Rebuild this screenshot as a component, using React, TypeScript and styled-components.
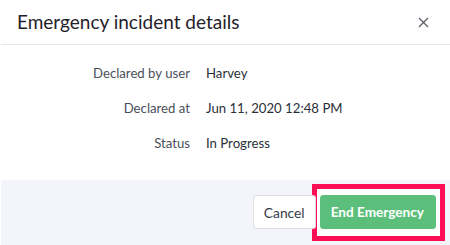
import React from "react";
import styled, { createGlobalStyle } from "styled-components";

const Global = createGlobalStyle`
  html, body { margin: 0; padding: 0; background: #ffffff; }
  body { font-family: Lato, "Open Sans", sans-serif; }
  * { box-sizing: border-box; }
`;

const Modal = styled.div`
  width: 449px;
  height: 245px;
  margin-left: 1px;
  display: flex;
  flex-direction: column;
  background: #ffffff;
  overflow: hidden;
`;

const Header = styled.div`
  height: 45px;
  display: flex;
  align-items: center;
  justify-content: space-between;
  padding: 0 21px 0 16px;
  border-bottom: 1px solid #e6e7ec;
`;

const Title = styled.h1`
  margin: 0;
  font-size: 19px;
  font-weight: 400;
  color: #1f2229;
  line-height: 1;
  padding-bottom: 2px;
`;

const CloseButton = styled.button`
  border: 0;
  background: transparent;
  padding: 0;
  width: 12px;
  height: 12px;
  display: flex;
  align-items: center;
  justify-content: center;
  cursor: pointer;
`;

const Body = styled.div`
  flex: 1;
  padding: 10px 0 20px;
  display: flex;
  flex-direction: column;
`;

const Row = styled.div`
  height: 35px;
  display: grid;
  grid-template-columns: 189px 1fr;
  column-gap: 16px;
  align-items: center;
  font-size: 13.2px;
`;

const Label = styled.span`
  text-align: right;
  color: #4a4f5a;
`;

const Value = styled.span`
  color: #2b2f38;
`;

const Footer = styled.div`
  height: 65px;
  background: #f4f5fa;
  display: flex;
  justify-content: flex-end;
  align-items: flex-start;
  gap: 4px;
  padding: 15px 14px 0 0;
`;

const Button = styled.button<{ $primary?: boolean }>`
  height: 34px;
  border-radius: 3px;
  font-family: Lato, "Open Sans", sans-serif;
  font-size: ${(p) => (p.$primary ? "13.6px" : "13.8px")};
  font-weight: ${(p) => (p.$primary ? 700 : 400)};
  padding: ${(p) => (p.$primary ? "0 11px 0 10px" : "0 10px")};
  border: 1px solid ${(p) => (p.$primary ? "#5bbf7b" : "#dcdee4")};
  background: ${(p) => (p.$primary ? "#5bbf7b" : "#ffffff")};
  color: ${(p) => (p.$primary ? "#ffffff" : "#353a46")};
  cursor: pointer;
  position: relative;
  z-index: 1;
`;

const Highlight = styled.div`
  position: relative;
  display: flex;
  &::before {
    content: "";
    position: absolute;
    top: -11px;
    left: -8px;
    right: -9px;
    bottom: -12px;
    border: 5px solid #ff0d55;
    background: #ffffff;
    z-index: 0;
  }
`;

export default function App() {
  return (
    <>
      <Global />
      <Modal>
        <Header>
          <Title>Emergency incident details</Title>
          <CloseButton aria-label="Close">
            <svg width="11" height="11" viewBox="0 0 11 11">
              <path d="M1 1 L10 10 M10 1 L1 10" stroke="#5a5d66" strokeWidth="1.3" fill="none" />
            </svg>
          </CloseButton>
        </Header>
        <Body>
          <Row>
            <Label>Declared by user</Label>
            <Value>Harvey</Value>
          </Row>
          <Row>
            <Label>Declared at</Label>
            <Value>Jun 11, 2020 12:48 PM</Value>
          </Row>
          <Row>
            <Label>Status</Label>
            <Value>In Progress</Value>
          </Row>
        </Body>
        <Footer>
          <Button>Cancel</Button>
          <Highlight>
            <Button $primary>End Emergency</Button>
          </Highlight>
        </Footer>
      </Modal>
    </>
  );
}
